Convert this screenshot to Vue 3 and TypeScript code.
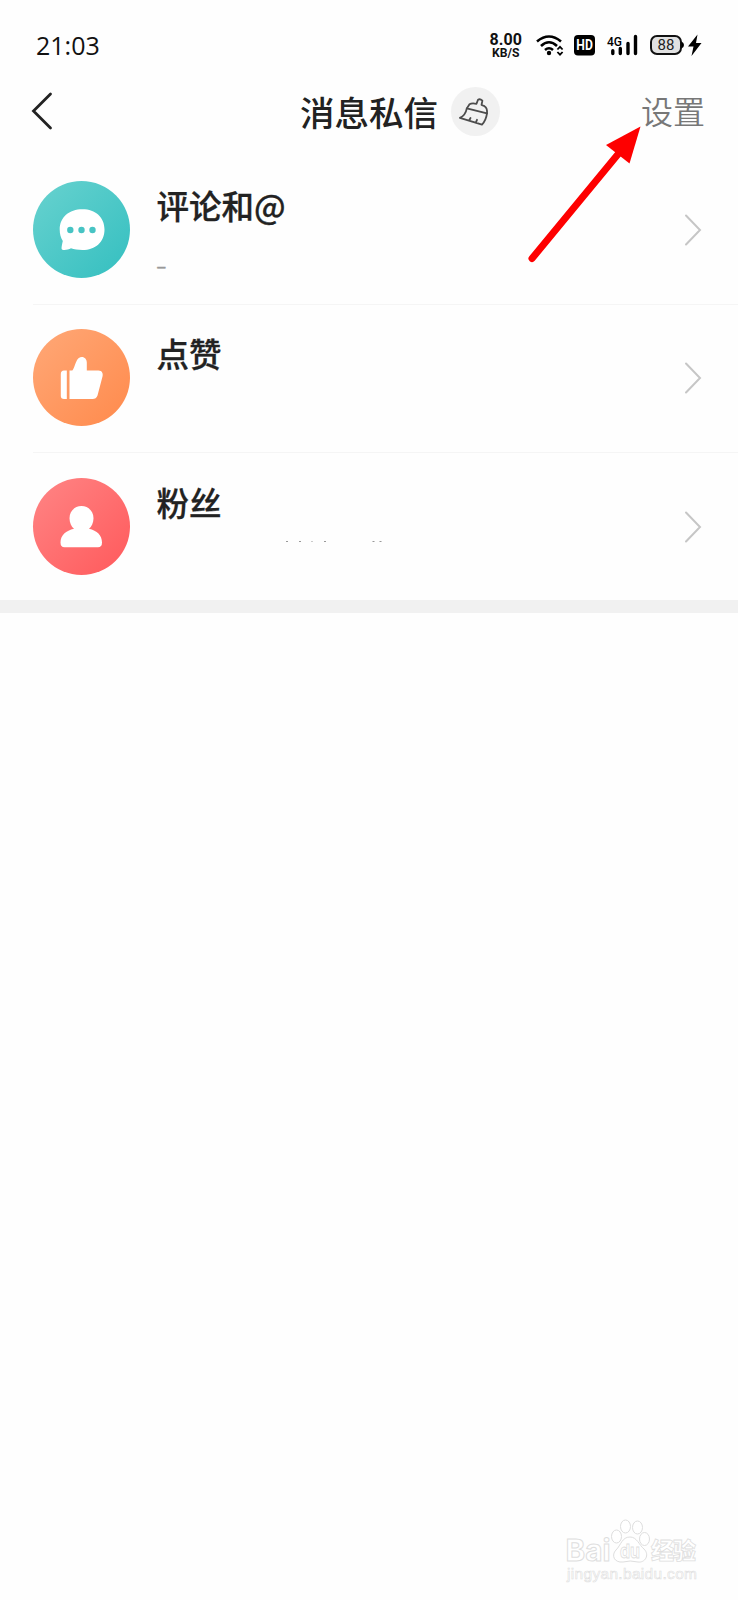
<script setup lang="ts">
interface Entry {
  id: 'comment' | 'like' | 'fans'
  title: string
  note: string
}

const entries: Entry[] = [
  { id: 'comment', title: '评论和@', note: '–' },
  { id: 'like', title: '点赞', note: '' },
  { id: 'fans', title: '粉丝', note: '' },
]
</script>

<template>
  <main class="screen">
    <div class="status">
      <span class="clock">21:03</span>
      <svg class="indicators" width="230" height="40" viewBox="480 26 230 40">
        <g font-weight="700" fill="#111">
          <text x="489.5" y="45" font-size="16" textLength="32.5">8.00</text>
          <text x="492" y="57" font-size="12.5" textLength="27.5" lengthAdjust="spacingAndGlyphs">KB/S</text>
        </g>
        <g fill="none" stroke="#000" stroke-width="2.6">
          <path d="M537 41.5Q549 31.5 561 41.5" />
          <path d="M541 46Q549 38.5 557 46" />
          <path d="M545 50Q549 46.5 553 50" />
        </g>
        <circle cx="549" cy="53" r="2.2" />
        <path d="M557.4 49.5L560 46.8L562.6 49.5M557.4 52L560 54.7L562.6 52" fill="none" stroke="#000" stroke-width="1.8" />
        <rect x="574" y="35" width="21" height="20.5" rx="4" />
        <text x="576.3" y="50.3" font-size="14.5" font-weight="700" fill="#fff" textLength="16.5" lengthAdjust="spacingAndGlyphs">HD</text>
        <text x="607" y="45.5" font-size="13.5" font-weight="500" textLength="15" lengthAdjust="spacingAndGlyphs">4G</text>
        <path d="M612.800 50.800V53.500M620.300 48.500V53.500M628 43.500V53.500M635.500 36.500V53.500" fill="none" stroke="#000" stroke-width="3.4" stroke-linecap="round" />
        <rect x="651" y="36" width="30" height="18" rx="6" fill="#e1e1e1" stroke="#111" stroke-width="2" />
        <path d="M681.500 41.500Q684 42.500 684 45Q684 47.500 681.500 48.500Z" />
        <text x="657.5" y="50.300" font-size="15" fill="#222" textLength="17">88</text>
        <path d="M697.500 34.500L688 46.500H693.500L691.500 56L701.500 43H696Z" />
      </svg>
    </div>

    <header class="header">
      <svg class="back" width="24" height="40" viewBox="0 0 24 40">
        <path d="M20.500 3L3.500 20L20.500 37" fill="none" stroke="#222" stroke-width="2.800" stroke-linecap="round" />
      </svg>
      <h1>消息私信</h1>
      <div class="actions">
        <span class="clean">
          <svg width="49" height="49" viewBox="0 0 49 49">
            <g fill="none" stroke="#4c4c4c" stroke-width="1.8" stroke-linejoin="round" stroke-linecap="round">
              <path d="M15.800 21.400L18.500 17.300Q21 15.600 25.500 16.800L27 12.700Q29 11.500 31.400 13.600L30.500 18L33.500 19.200Q36.500 21 36 26.400Z" />
              <path d="M15.800 21.400Q14.500 28.500 8.900 30.800L31 37.600Q35 33.500 36 26.400M18.300 33.200L19.500 31M25 35.200L26 32.800" />
            </g>
          </svg>
        </span>
        <span class="settings">设置</span>
      </div>
    </header>

    <section class="list">
      <div v-for="entry in entries" :key="entry.id" class="row">
        <div class="avatar" :class="entry.id">
          <svg width="97" height="97" viewBox="0 0 97 97" fill="#fff">
            <template v-if="entry.id === 'comment'">
              <path d="M49.500 28.200C62.500 28.200 71.500 36.200 71.500 48.500C71.500 61 62.500 69 49.500 69C45 69 41 68.500 38 67.300C35.500 68.600 32 69.500 29.500 68.800C28 68.300 28.500 66 29.800 60C27.800 57 26.700 53 26.700 48.500C26.700 36.200 36 28.200 49.500 28.200Z" />
              <g fill="#47c4c4">
                <circle cx="37.300" cy="49" r="3.200" />
                <circle cx="48.500" cy="49" r="3.200" />
                <circle cx="59.500" cy="49" r="3.200" />
              </g>
            </template>
            <template v-else-if="entry.id === 'like'">
              <path d="M33.800 41.500V70H31Q27.800 70 27.800 66.800V45Q27.800 41.500 31 41.500Z" />
              <path d="M36.500 70V41.500H39.300C41.500 39 42.800 31.500 45.500 29.200C49.500 26.200 53.800 29 53.800 33.500V41.500H65.500C69 41.500 70.300 44.500 69.500 47.500L64.500 66.500C63.700 69 62 70 59.500 70Z" />
            </template>
            <template v-else>
              <path d="M48.500 28C55.500 28 60.500 33.500 60.500 40.200C60.500 45 58.500 48.500 56 50.800C64 52.500 69 57.500 69 64.500Q69 69.200 65 69.200H31.500Q27.500 69.200 27.500 64.500C27.500 57.500 33 52.500 41 50.800C38.500 48.500 36.500 45 36.500 40.200C36.500 33.500 41.500 28 48.500 28Z" />
            </template>
          </svg>
        </div>
        <div class="body">
          <h2>{{ entry.title }}</h2>
          <p v-if="entry.note" class="note">{{ entry.note }}</p>
          <svg v-if="entry.id === 'fans'" class="ticks" width="240" height="6" viewBox="0 0 240 6">
            <path d="M129 3.500H131M142 3.500H144M154.500 3.500H155.500M167 3.500H169M215.500 3.500H217.500M222.500 3.500H224.500" stroke="#999" stroke-width="1" />
          </svg>
        </div>
        <svg class="chevron" width="18" height="34" viewBox="0 0 18 34">
          <path d="M2 2.500L16 17L2 31.500" fill="none" stroke="#c6c6c6" stroke-width="2" stroke-linecap="round" />
        </svg>
      </div>
    </section>
    <div class="band"></div>

    <svg class="pointer" width="130" height="150" viewBox="520 120 130 150">
      <path d="M532 258.500L619 153" stroke="#fe0000" stroke-width="7" stroke-linecap="round" />
      <path d="M640.500 126.500L606 145L629.500 163.500Z" fill="#fe0000" />
    </svg>

    <svg class="watermark" width="150" height="70" viewBox="560 1515 150 70">
      <g fill="#fff" stroke="#dedede" stroke-width="1">
        <text class="brand" x="565.500" y="1561" font-size="30" textLength="45" lengthAdjust="spacingAndGlyphs">Bai</text>
        <path d="M630 1537C637 1537 639 1545 644 1549C650 1555 645 1563 638 1562Q630 1560 623 1562C614 1563 611 1555 616 1550C621 1545 622 1537 630 1537Z" />
        <ellipse cx="616.500" cy="1536.500" rx="5" ry="6.500" />
        <ellipse cx="625.500" cy="1526.500" rx="5" ry="6.500" />
        <ellipse cx="637.500" cy="1527.500" rx="5" ry="6.500" />
        <ellipse cx="644.500" cy="1539" rx="5" ry="6.500" />
        <text class="brand" x="620" y="1558" font-size="19" stroke-width="0.8" textLength="20" lengthAdjust="spacingAndGlyphs">du</text>
        <text x="651" y="1559" font-size="23" font-weight="900" stroke-width="0.8" textLength="45">经验</text>
        <text class="site" x="567" y="1579" font-size="15.5" stroke-width="0.6" textLength="130">jingyan.baidu.com</text>
      </g>
    </svg>
  </main>
</template>

<style>
body {
  background: #fefefe;
}
</style>

<style scoped>
.screen {
  position: relative;
  width: 738px;
  height: 1600px;
  overflow: hidden;
  background: #fefefe;
  color: #222;
  font-family: "Noto Sans CJK SC", sans-serif;
}
svg {
  display: block;
}
.status {
  box-sizing: border-box;
  height: 80px;
  padding: 26px 28px 0 36px;
  display: flex;
  justify-content: space-between;
}
.clock {
  color: #111;
  font-family: "Open Sans", sans-serif;
  font-size: 25px;
  line-height: 38px;
}
.indicators {
  font-family: Roboto, sans-serif;
}
.header {
  height: 62px;
  padding: 0 33px 0 30px;
  display: grid;
  grid-template-columns: 1fr auto 1fr;
  align-items: center;
}
h1 {
  margin: 0 0 1px 3px;
  font-size: 34.5px;
  line-height: 50px;
  font-weight: 500;
}
.actions {
  display: flex;
  align-items: center;
  justify-content: space-between;
}
.clean {
  width: 49px;
  height: 49px;
  margin-left: 12.500px;
  border-radius: 50%;
  background: #f1f1f1;
}
.settings {
  margin-top: -2px;
  font-size: 32px;
  line-height: 46px;
  font-weight: 350;
  color: #777;
}
.list {
  padding: 14px 0 0 33px;
}
.row {
  box-sizing: border-box;
  height: 148.500px;
  padding: 25px 36px 0 0;
  display: flex;
  border-bottom: 1px solid #f5f5f5;
}
.row:nth-child(2) {
  padding-top: 24px;
}
.row:last-child {
  height: 147px;
  border-bottom: 0;
}
.avatar {
  width: 97px;
  height: 97px;
  border-radius: 50%;
}
.comment {
  background: linear-gradient(135deg, #68d2cf, #34bfc0);
}
.like {
  background: linear-gradient(135deg, #ffa877, #ff8a4c);
}
.fans {
  background: linear-gradient(135deg, #ff8585, #ff595b);
}
.body {
  flex: 1;
  padding-left: 26.500px;
}
h2 {
  margin: 1px 0 0;
  font-size: 32.500px;
  line-height: 46px;
  font-weight: 500;
  -webkit-text-stroke: 0.3px #222;
}
.note {
  margin: 19px 0 0;
  font-size: 18px;
  line-height: 36px;
  color: #999;
  -webkit-text-stroke: 0.5px #999;
}
.ticks {
  margin-top: 13px;
}
.chevron {
  margin-top: 32px;
}
.band {
  height: 13px;
  background: #f1f1f1;
}
.pointer {
  position: absolute;
  left: 520px;
  top: 120px;
}
.watermark {
  position: absolute;
  left: 560px;
  top: 1515px;
}
.brand {
  font-family: Inter, sans-serif;
  font-weight: 700;
}
.site {
  font-family: "Liberation Sans", sans-serif;
}
</style>
